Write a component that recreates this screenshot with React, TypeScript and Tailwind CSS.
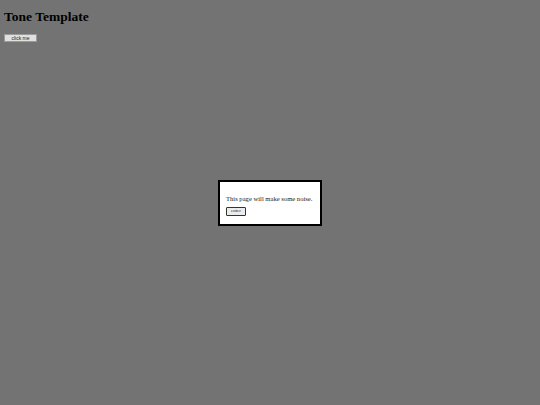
export default function App() {
  return (
    <div className="min-h-screen bg-[#737373] px-[4px] pt-[9px] font-['Liberation_Serif',serif] text-black">
      <h1 className="text-[13.5px] font-bold leading-[15px]">Tone Template</h1>
      <button className="mt-[10px] block h-[8px] w-[33px] border border-[#9a9a9a] bg-[#e0e0e0] font-['Liberation_Sans',sans-serif] text-[5px] leading-[6px] text-[#222]">
        click me
      </button>

      <div className="fixed inset-0 flex items-center justify-center">
        <div className="w-[104px] border-2 border-black bg-white px-[6px] pt-[12px] pb-[8px]">
          <p className="text-[6.6px] leading-[9px] text-[#222]">This page will make some noise.</p>
          <button className="mt-[4px] block h-[9px] w-[20px] rounded-[1px] border border-[#333] bg-[#ececec] text-[5px] leading-[6px] text-[#222]">
            enter
          </button>
        </div>
      </div>
    </div>
  );
}
